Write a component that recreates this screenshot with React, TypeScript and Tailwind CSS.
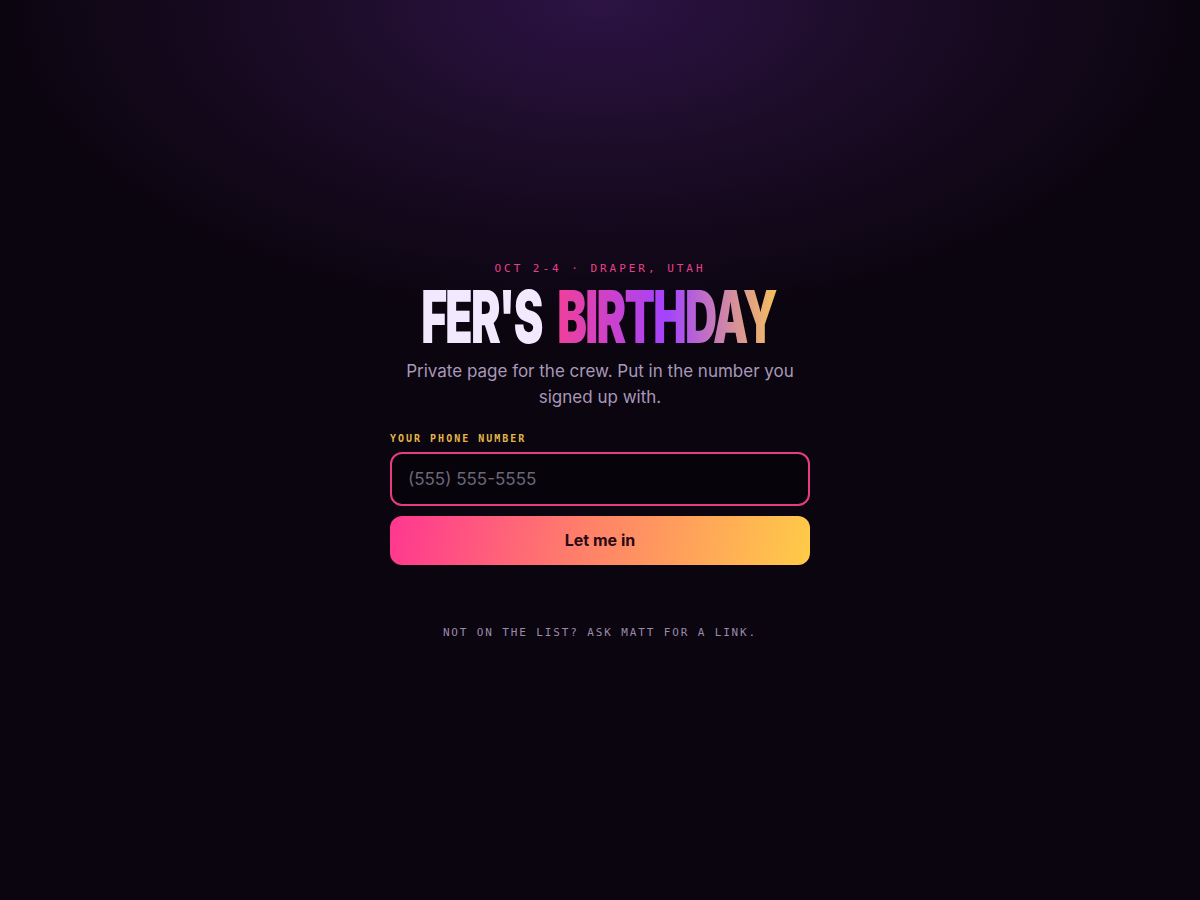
import React from "react";

export default function App() {
  return (
    <div
      className="min-h-[900px] w-full flex items-center justify-center bg-[#0b0510] bg-[radial-gradient(ellipse_600px_320px_at_600px_0px,#2c1344_0%,#1a0b24_55%,#0b0510_100%)]"
      style={{ fontFamily: "Inter, 'Noto Sans', sans-serif" }}
    >
      <div className="w-[420px] flex flex-col items-center">
        <div
          className="text-[11px] tracking-[0.27em] text-[#e8408e] leading-none"
          style={{ fontFamily: "'DejaVu Sans Mono', monospace" }}
        >
          OCT 2-4 · DRAPER, UTAH
        </div>
        <h1
          className="mt-[12px] h-[62px] flex items-center justify-center text-[73px] font-black leading-[62px] whitespace-nowrap scale-x-[0.61] tracking-[-0.04em]"
          style={{ fontFamily: "Inter, sans-serif" }}
        >
          <span className="text-[#f3e9ff] mr-[26px]">FER'S</span>
          <span className="bg-[linear-gradient(90deg,#f0409a_0%,#a443ff_50%,#f5c25a_100%)] bg-clip-text text-transparent pr-[4px]">
            BIRTHDAY
          </span>
        </h1>
        <p className="mt-[10px] text-[17px] leading-[26px] text-[#a898b8] text-center">
          Private page for the crew. Put in the number you signed up with.
        </p>
        <label
          className="self-start mt-[24px] text-[10px] font-bold tracking-[0.2em] text-[#e2b64a] leading-none"
          style={{ fontFamily: "'DejaVu Sans Mono', monospace" }}
        >
          YOUR PHONE NUMBER
        </label>
        <input
          type="text"
          placeholder="(555) 555-5555"
          className="mt-[8px] w-full h-[54px] rounded-xl border-2 border-[#e53d80] bg-[#07030a] px-4 text-[17px] text-white placeholder:text-[#6e6678] outline-none"
        />
        <button className="mt-[10px] w-full h-[49px] rounded-xl bg-[linear-gradient(100deg,#ff3790_0%,#ff7e6a_45%,#ffcb48_100%)] text-[16px] font-bold text-[#2a0a18]">
          Let me in
        </button>
        <div
          className="mt-[62px] text-[11px] tracking-[0.17em] text-[#9a8aab] leading-none"
          style={{ fontFamily: "'DejaVu Sans Mono', monospace" }}
        >
          NOT ON THE LIST? ASK MATT FOR A LINK.
        </div>
      </div>
    </div>
  );
}
